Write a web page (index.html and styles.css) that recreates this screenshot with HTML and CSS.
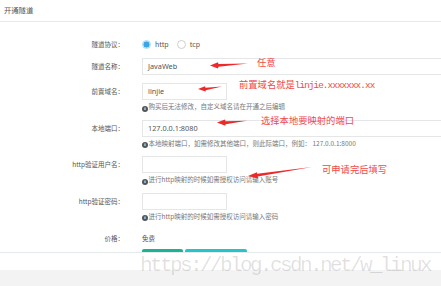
FILE: index.html
```html
<!DOCTYPE html>
<html lang="zh-CN">
<head>
<meta charset="utf-8">
<title>开通隧道</title>
<link rel="stylesheet" href="styles.css">
</head>
<body>
<div class="card">
  <div class="card-title">开通隧道</div>
  <form class="form">
    <div class="row row-radio">
      <label class="lbl">隧道协议：</label>
      <div class="ctl radios">
        <span class="radio checked"></span><span class="rtext">http</span>
        <span class="radio"></span><span class="rtext">tcp</span>
      </div>
    </div>
    <div class="row">
      <label class="lbl">隧道名称：</label>
      <div class="ctl"><div class="inp wide">JavaWeb</div></div>
    </div>
    <div class="row">
      <label class="lbl">前置域名：</label>
      <div class="ctl">
        <div class="inp narrow">linjie</div>
        <div class="help"><span class="ic">i</span>购买后无法修改，自定义域名请在开通之后编辑</div>
      </div>
    </div>
    <div class="row">
      <label class="lbl">本地端口：</label>
      <div class="ctl">
        <div class="inp wide">127.0.0.1:8080</div>
        <div class="help"><span class="ic">i</span>本地映射端口，如需修改其他端口，则此际端口，例如： 127.0.0.1:8000</div>
      </div>
    </div>
    <div class="row">
      <label class="lbl">http验证用户名：</label>
      <div class="ctl">
        <div class="inp narrow"></div>
        <div class="help"><span class="ic">i</span>进行http映射的时候如需授权访问请输入账号</div>
      </div>
    </div>
    <div class="row">
      <label class="lbl">http验证密码：</label>
      <div class="ctl">
        <div class="inp narrow"></div>
        <div class="help"><span class="ic">i</span>进行http映射的时候如需授权访问请输入密码</div>
      </div>
    </div>
    <div class="row row-price">
      <label class="lbl">价格：</label>
      <div class="ctl price">免费</div>
    </div>
    <div class="btns">
      <span class="btn btn-primary"></span>
      <span class="btn btn-info"></span>
    </div>
  </form>
</div>
<div class="gap"></div>

<svg class="arrows" width="441" height="286" viewBox="0 0 441 286">
  <polygon fill="#ec2a2a" points="210,65.5 218,62.3 218.5,64 248,63.6 218.5,66.8 218,68.6"/>
  <polygon fill="#ec2a2a" points="198,89 205,86.3 205.5,87.7 222,86.6 205.8,90.2 205.5,91.6"/>
  <polygon fill="#ec2a2a" points="217,122.6 225,119.6 225.5,121.2 247,120.8 225.6,124.2 225.3,125.8"/>
  <polygon fill="#ec2a2a" points="248,176 257,172.2 257.2,173.8 312,167 257.8,176.6 258,178.4"/>
</svg>
<div class="anno a1">任意</div>
<div class="anno a2">前置域名就是<span class="mono">linjie.xxxxxxx.xx</span></div>
<div class="anno a3">选择本地要映射的端口</div>
<div class="anno a4">可申请完后填写</div>
<div class="watermark">https://blog.csdn.net/w_linux</div>
</body>
</html>
```

FILE: styles.css
```css
* { box-sizing: border-box; margin: 0; padding: 0; }
html, body { width: 441px; height: 286px; overflow: hidden; background: #f3f3f4; }
body {
  position: relative;
  font-family: "Noto Sans CJK SC", "Noto Sans", sans-serif;
  color: #676a6c;
}
.card {
  background: #fff;
  height: 253px;
  border-bottom: 1px solid #e7eaec;
  overflow: hidden;
}
.gap { height: 17px; background: #fff; }
.card-title {
  height: 22px;
  border-bottom: 1px solid #e7eaec;
  padding-left: 4px;
  font-size: 7.3px;
  line-height: 21px;
  color: #555;
}
.form { padding-top: 16px; }
.row { display: flex; margin-top: 8px; }
.row-radio { margin-top: 0; height: 12px; align-items: center; }
.row-price { margin-top: 12px; }
.lbl {
  flex: none;
  width: 124px;
  text-align: right;
  font-size: 6.5px;
  line-height: 17px;
  color: #555;
  white-space: nowrap;
}
.row-radio .lbl { line-height: 12px; }
.row-price .lbl { line-height: 10px; }
.ctl { margin-left: 18px; flex: 1; min-width: 0; }
.radios { display: flex; align-items: center; height: 12px; }
.radio {
  width: 9px; height: 9px; border-radius: 50%;
  border: 1px solid #cfcfcf; background: #fff; flex: none;
}
.radio.checked {
  border: 1px solid #a9daf4;
  background: radial-gradient(circle, #3aa6e6 0 2.8px, #d3ecfa 3.3px);
}
.rtext { font-size: 7px; color: #555; margin-left: 4px; margin-right: 8px; line-height: 12px; }
.inp {
  height: 17px;
  border: 1px solid #e5e6e7;
  font-family: "Noto Sans", sans-serif;
  font-size: 7.3px;
  line-height: 15px;
  padding-left: 5px;
  color: #555;
  white-space: nowrap;
}
.wide { width: 320px; }
.narrow { width: 85px; }
.help {
  margin-top: 1px;
  font-size: 6.5px;
  line-height: 10px;
  white-space: nowrap;
  color: #777;
}
.ic {
  display: inline-block;
  width: 6px; height: 6px; border-radius: 50%;
  background: #555; color: #fff;
  font-family: "Liberation Serif", serif;
  font-weight: bold;
  font-size: 5px; line-height: 6px; text-align: center;
  vertical-align: -0.5px;
  margin-right: 0.5px;
}
.price { font-size: 6.5px; line-height: 10px; color: #555; }
.btns { display: flex; gap: 2px; margin-left: 142px; margin-top: 6px; }
.btn { height: 20px; border-radius: 2px; }
.btn-primary { width: 41px; background: #1ab394; }
.btn-info { width: 62px; background: #23c6c8; }

.arrows { position: absolute; left: 0; top: 0; pointer-events: none; }
.anno {
  position: absolute;
  color: #f34848;
  font-family: "Noto Sans CJK SC", sans-serif;
  font-size: 9.3px;
  line-height: 10px;
  white-space: nowrap;
}
.a1 { left: 257px; top: 57px; }
.a2 { left: 239px; top: 79px; }
.a3 { left: 261px; top: 115px; }
.a4 { left: 322px; top: 164px; }
.mono { font-family: "Liberation Mono", monospace; letter-spacing: -0.9px; }
.watermark {
  position: absolute;
  left: 140px;
  top: 255px;
  font-family: "Liberation Mono", monospace;
  font-size: 21px;
  line-height: 21px;
  letter-spacing: -2.6px;
  color: rgba(0, 0, 0, 0.12);
  white-space: nowrap;
}
```
